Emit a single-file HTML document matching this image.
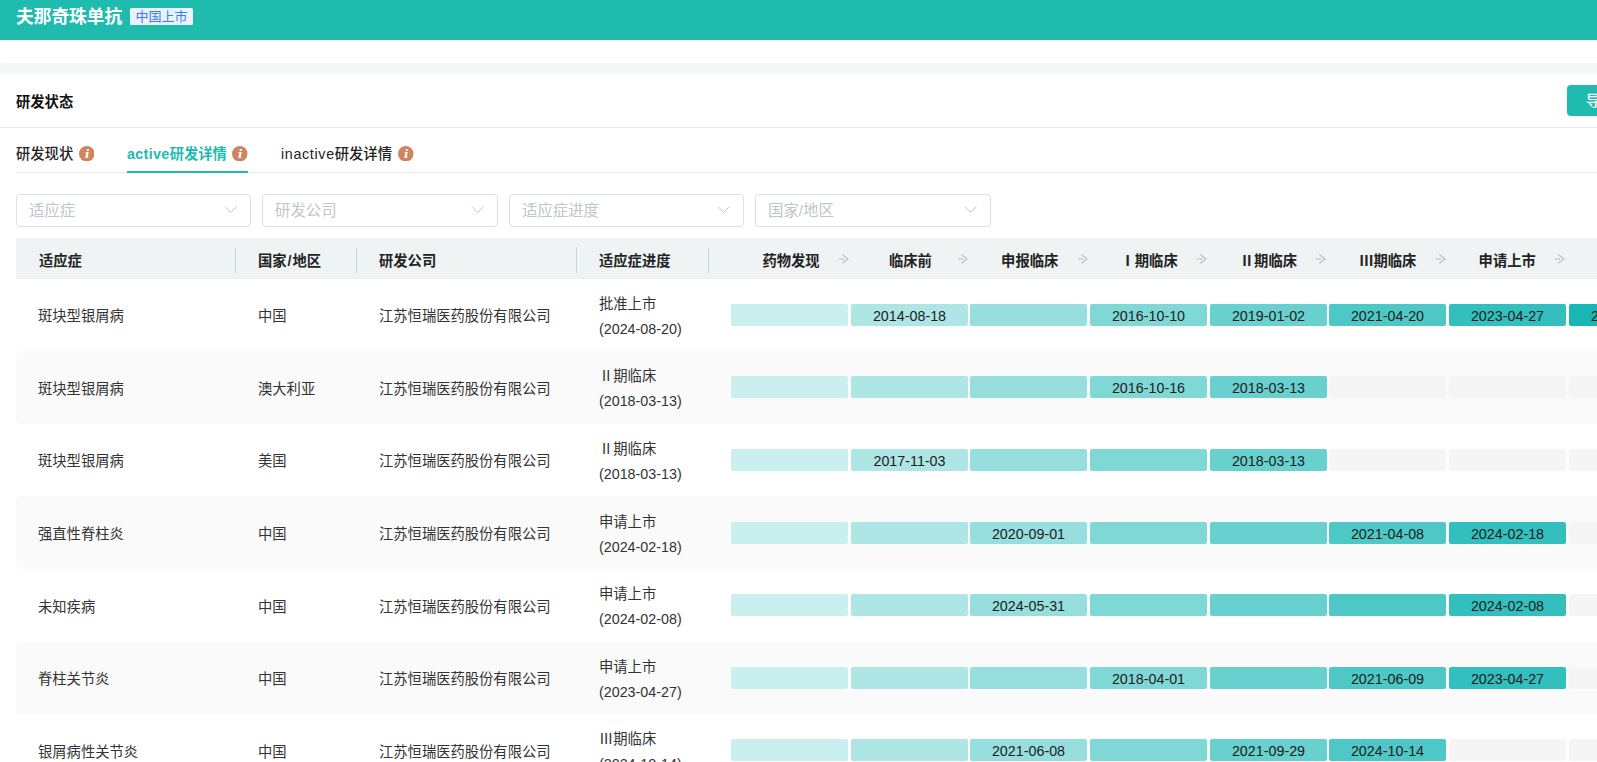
<!DOCTYPE html>
<html lang="zh-CN">
<head>
<meta charset="utf-8">
<title>夫那奇珠单抗</title>
<style>
*{box-sizing:border-box;margin:0;padding:0}
html,body{width:1597px;height:762px;overflow:hidden;background:#fff}
body{position:relative;font-family:"Liberation Sans","Noto Sans CJK SC",sans-serif;font-size:14.3px;color:#333}
.hdr{position:absolute;left:0;top:0;width:1597px;height:40px;background:#1ebbae}
.title{position:absolute;left:16px;top:3px;height:28px;line-height:28px;font-size:17.7px;font-weight:700;color:#fff;white-space:nowrap}
.tag{position:absolute;left:130px;top:8px;width:63px;height:17px;line-height:17px;border-radius:1.5px;background:#ebf1fe;color:#337df5;font-size:13px;text-align:center;white-space:nowrap}
.strip{position:absolute;left:0;top:58px;width:1597px;height:22px;background:#f6f7f9}
.pre{position:absolute;left:0;top:40px;width:1597px;height:23px;background:#fff;border-bottom-left-radius:2.5px}
.card{position:absolute;left:0;top:74px;width:1597px;height:688px;background:#fff;border-top-left-radius:2.5px}
.ctitle{position:absolute;left:16px;top:89.3px;height:26px;line-height:26px;font-weight:700;color:#111;white-space:nowrap}
.btn{position:absolute;left:1567px;top:85px;width:60px;height:31px;line-height:33.6px;font-weight:500;background:#1ebbae;color:#fff;border-radius:4px;padding-left:19px;white-space:nowrap}
.hr1{position:absolute;left:0;top:127px;width:1597px;height:1px;background:#e8e8eb}
.hr2{position:absolute;left:16px;top:172px;width:1581px;height:1px;background:#e4e7ed}
.tab{position:absolute;top:141.3px;height:26px;line-height:26px;font-weight:500;color:#222;white-space:nowrap}
.tab.on{color:#1ebbae;font-weight:700}
.tab.on .lt{letter-spacing:.35px}
.tab .lt{letter-spacing:.66px}
.ink{position:absolute;left:127px;top:171px;width:121px;height:2px;background:#1ebbae}
.info{position:absolute;top:145.8px;width:15.5px;height:15.5px}
.sel{position:absolute;top:194px;width:235px;height:33px;border:1px solid #dcdfe6;border-radius:4px;background:#fff;color:#c0c4cc;font-size:15.4px;line-height:31px;padding-left:12px;white-space:nowrap}
.sel svg{position:absolute;right:12px;top:10px;width:14px;height:10px}
.thead{position:absolute;left:16px;top:238px;width:1581px;height:41px;background:#eff3f4;border-bottom:1px solid #ebeef5}
.th{position:absolute;top:241px;height:40px;line-height:40px;font-weight:700;color:#222;white-space:nowrap}
.vd{position:absolute;top:247px;width:1px;height:26px;background:#c9d5d3}
.ph{position:absolute;top:241px;height:40px;line-height:40px;font-weight:700;color:#222;white-space:nowrap;text-align:center;width:117px}
.arr{position:absolute;top:254px;width:10px;height:10px}
.row{position:absolute;left:16px;width:1581px;height:73px}
.row.s{background:#fafafa;border-top-left-radius:4px;border-bottom-left-radius:4px}
.c{position:absolute;top:1.5px;height:72.6px;line-height:72.6px;white-space:nowrap;color:#333}
.c1{left:22px}.c2{left:242px}.c3{left:363px}
.c4{left:583px;line-height:25.1px;top:12.6px;height:50.2px}
.b{position:absolute;top:25px;width:117px;height:22px;border-radius:2px;line-height:24.4px;text-align:center;color:#1c1c1c;white-space:nowrap;background:#f5f5f5}
.p1{left:715px}.p2{left:835px}.p3{left:954px}.p4{left:1074px}.p5{left:1194px}.p6{left:1313px}.p7{left:1433px}.p8{left:1553px}
.b.p1.a{background:#c9efee}.b.p2.a{background:#aee6e5}.b.p3.a{background:#97dfde}.b.p4.a{background:#80d8d6}.b.p5.a{background:#68d0ce}.b.p6.a{background:#4ec8c7}.b.p7.a{background:#33bfbe}.b.p8.a{background:#18b7b3}
</style>
</head>
<body>
<div class="hdr"><div class="title">夫那奇珠单抗</div><div class="tag">中国上市</div></div>
<div class="strip"></div><div class="pre"></div><div class="card"></div>
<div class="ctitle">研发状态</div><div class="btn">导出</div><div class="hr1"></div>
<div class="tab" style="left:16px">研发现状</div><svg class="info" style="left:78.8px" viewBox="0 0 15 15"><circle cx="7.5" cy="7.5" r="7.5" fill="#cf8461"/><text x="8" y="11.6" text-anchor="middle" font-family="'DejaVu Serif','Liberation Serif',serif" font-style="italic" font-weight="700" font-size="11.4" fill="#fff">i</text></svg>
<div class="tab on" style="left:127px"><span class="lt">active</span>研发详情</div><svg class="info" style="left:232.3px" viewBox="0 0 15 15"><circle cx="7.5" cy="7.5" r="7.5" fill="#cf8461"/><text x="8" y="11.6" text-anchor="middle" font-family="'DejaVu Serif','Liberation Serif',serif" font-style="italic" font-weight="700" font-size="11.4" fill="#fff">i</text></svg>
<div class="tab" style="left:281px"><span class="lt">inactive</span>研发详情</div><svg class="info" style="left:398px" viewBox="0 0 15 15"><circle cx="7.5" cy="7.5" r="7.5" fill="#cf8461"/><text x="8" y="11.6" text-anchor="middle" font-family="'DejaVu Serif','Liberation Serif',serif" font-style="italic" font-weight="700" font-size="11.4" fill="#fff">i</text></svg>
<div class="hr2"></div><div class="ink"></div>
<div class="sel" style="left:16px;width:235px">适应症<svg viewBox="0 0 14 10"><path d="M1 1.6 L6.6 7.5 L12.5 1.5" fill="none" stroke="#bfc3cd" stroke-width="1"/></svg></div>
<div class="sel" style="left:262px;width:236px">研发公司<svg viewBox="0 0 14 10"><path d="M1 1.6 L6.6 7.5 L12.5 1.5" fill="none" stroke="#bfc3cd" stroke-width="1"/></svg></div>
<div class="sel" style="left:509px;width:235px">适应症进度<svg viewBox="0 0 14 10"><path d="M1 1.6 L6.6 7.5 L12.5 1.5" fill="none" stroke="#bfc3cd" stroke-width="1"/></svg></div>
<div class="sel" style="left:755px;width:236px">国家/地区<svg viewBox="0 0 14 10"><path d="M1 1.6 L6.6 7.5 L12.5 1.5" fill="none" stroke="#bfc3cd" stroke-width="1"/></svg></div>
<div class="thead"></div>
<div class="th" style="left:39px">适应症</div>
<div class="th" style="left:258px">国家<span style="margin:0 1px">/</span>地区</div>
<div class="th" style="left:379px">研发公司</div>
<div class="th" style="left:599px">适应症进度</div>
<div class="vd" style="left:235px"></div>
<div class="vd" style="left:356px"></div>
<div class="vd" style="left:576px"></div>
<div class="vd" style="left:708px"></div>
<div class="ph" style="left:732.5px">药物发现</div>
<svg class="arr" style="left:838.9px" viewBox="0 0 10 10"><path d="M0.2 4.9 H2.2 M2.9 4.9 H5" fill="none" stroke="#bdc1ca" stroke-width="1.45"/><path d="M3.4 0.55 L8.9 4.9 L3.4 9.25" fill="none" stroke="#bdc1ca" stroke-width="1.3"/></svg>
<div class="ph" style="left:851.9px">临床前</div>
<svg class="arr" style="left:958.3px" viewBox="0 0 10 10"><path d="M0.2 4.9 H2.2 M2.9 4.9 H5" fill="none" stroke="#bdc1ca" stroke-width="1.45"/><path d="M3.4 0.55 L8.9 4.9 L3.4 9.25" fill="none" stroke="#bdc1ca" stroke-width="1.3"/></svg>
<div class="ph" style="left:971.2px">申报临床</div>
<svg class="arr" style="left:1077.6px" viewBox="0 0 10 10"><path d="M0.2 4.9 H2.2 M2.9 4.9 H5" fill="none" stroke="#bdc1ca" stroke-width="1.45"/><path d="M3.4 0.55 L8.9 4.9 L3.4 9.25" fill="none" stroke="#bdc1ca" stroke-width="1.3"/></svg>
<div class="ph" style="left:1090.6px">Ⅰ期临床</div>
<svg class="arr" style="left:1197.0px" viewBox="0 0 10 10"><path d="M0.2 4.9 H2.2 M2.9 4.9 H5" fill="none" stroke="#bdc1ca" stroke-width="1.45"/><path d="M3.4 0.55 L8.9 4.9 L3.4 9.25" fill="none" stroke="#bdc1ca" stroke-width="1.3"/></svg>
<div class="ph" style="left:1209.9px">Ⅱ期临床</div>
<svg class="arr" style="left:1316.3px" viewBox="0 0 10 10"><path d="M0.2 4.9 H2.2 M2.9 4.9 H5" fill="none" stroke="#bdc1ca" stroke-width="1.45"/><path d="M3.4 0.55 L8.9 4.9 L3.4 9.25" fill="none" stroke="#bdc1ca" stroke-width="1.3"/></svg>
<div class="ph" style="left:1329.3px">Ⅲ期临床</div>
<svg class="arr" style="left:1435.7px" viewBox="0 0 10 10"><path d="M0.2 4.9 H2.2 M2.9 4.9 H5" fill="none" stroke="#bdc1ca" stroke-width="1.45"/><path d="M3.4 0.55 L8.9 4.9 L3.4 9.25" fill="none" stroke="#bdc1ca" stroke-width="1.3"/></svg>
<div class="ph" style="left:1448.7px">申请上市</div>
<svg class="arr" style="left:1555.1px" viewBox="0 0 10 10"><path d="M0.2 4.9 H2.2 M2.9 4.9 H5" fill="none" stroke="#bdc1ca" stroke-width="1.45"/><path d="M3.4 0.55 L8.9 4.9 L3.4 9.25" fill="none" stroke="#bdc1ca" stroke-width="1.3"/></svg>
<div class="ph" style="left:1568.0px">批准上市</div>
<svg class="arr" style="left:1674.4px" viewBox="0 0 10 10"><path d="M0.2 4.9 H2.2 M2.9 4.9 H5" fill="none" stroke="#bdc1ca" stroke-width="1.45"/><path d="M3.4 0.55 L8.9 4.9 L3.4 9.25" fill="none" stroke="#bdc1ca" stroke-width="1.3"/></svg>
<div class="row" style="top:279px;height:72px"><div class="c c1" style="top:1.10px">斑块型银屑病</div><div class="c c2" style="top:1.10px">中国</div><div class="c c3" style="top:1.10px">江苏恒瑞医药股份有限公司</div><div class="c c4" style="top:12.80px">批准上市<br>(2024-08-20)</div><div class="b p1 a" style="top:25px"></div><div class="b p2 a" style="top:25px">2014-08-18</div><div class="b p3 a" style="top:25px"></div><div class="b p4 a" style="top:25px">2016-10-10</div><div class="b p5 a" style="top:25px">2019-01-02</div><div class="b p6 a" style="top:25px">2021-04-20</div><div class="b p7 a" style="top:25px">2023-04-27</div><div class="b p8 a" style="top:25px">2024-08-20</div></div>
<div class="row s" style="top:351px;height:73px"><div class="c c1" style="top:1.70px">斑块型银屑病</div><div class="c c2" style="top:1.70px">澳大利亚</div><div class="c c3" style="top:1.70px">江苏恒瑞医药股份有限公司</div><div class="c c4" style="top:13.40px">Ⅱ期临床<br>(2018-03-13)</div><div class="b p1 a" style="top:25px"></div><div class="b p2 a" style="top:25px"></div><div class="b p3 a" style="top:25px"></div><div class="b p4 a" style="top:25px">2016-10-16</div><div class="b p5 a" style="top:25px">2018-03-13</div><div class="b p6" style="top:25px"></div><div class="b p7" style="top:25px"></div><div class="b p8" style="top:25px"></div></div>
<div class="row" style="top:424px;height:72px"><div class="c c1" style="top:1.30px">斑块型银屑病</div><div class="c c2" style="top:1.30px">美国</div><div class="c c3" style="top:1.30px">江苏恒瑞医药股份有限公司</div><div class="c c4" style="top:13.00px">Ⅱ期临床<br>(2018-03-13)</div><div class="b p1 a" style="top:25px"></div><div class="b p2 a" style="top:25px">2017-11-03</div><div class="b p3 a" style="top:25px"></div><div class="b p4 a" style="top:25px"></div><div class="b p5 a" style="top:25px">2018-03-13</div><div class="b p6" style="top:25px"></div><div class="b p7" style="top:25px"></div><div class="b p8" style="top:25px"></div></div>
<div class="row s" style="top:496px;height:73px"><div class="c c1" style="top:1.90px">强直性脊柱炎</div><div class="c c2" style="top:1.90px">中国</div><div class="c c3" style="top:1.90px">江苏恒瑞医药股份有限公司</div><div class="c c4" style="top:13.60px">申请上市<br>(2024-02-18)</div><div class="b p1 a" style="top:26px"></div><div class="b p2 a" style="top:26px"></div><div class="b p3 a" style="top:26px">2020-09-01</div><div class="b p4 a" style="top:26px"></div><div class="b p5 a" style="top:26px"></div><div class="b p6 a" style="top:26px">2021-04-08</div><div class="b p7 a" style="top:26px">2024-02-18</div><div class="b p8" style="top:26px"></div></div>
<div class="row" style="top:569px;height:73px"><div class="c c1" style="top:1.50px">未知疾病</div><div class="c c2" style="top:1.50px">中国</div><div class="c c3" style="top:1.50px">江苏恒瑞医药股份有限公司</div><div class="c c4" style="top:13.20px">申请上市<br>(2024-02-08)</div><div class="b p1 a" style="top:25px"></div><div class="b p2 a" style="top:25px"></div><div class="b p3 a" style="top:25px">2024-05-31</div><div class="b p4 a" style="top:25px"></div><div class="b p5 a" style="top:25px"></div><div class="b p6 a" style="top:25px"></div><div class="b p7 a" style="top:25px">2024-02-08</div><div class="b p8" style="top:25px"></div></div>
<div class="row s" style="top:642px;height:72px"><div class="c c1" style="top:1.10px">脊柱关节炎</div><div class="c c2" style="top:1.10px">中国</div><div class="c c3" style="top:1.10px">江苏恒瑞医药股份有限公司</div><div class="c c4" style="top:12.80px">申请上市<br>(2023-04-27)</div><div class="b p1 a" style="top:25px"></div><div class="b p2 a" style="top:25px"></div><div class="b p3 a" style="top:25px"></div><div class="b p4 a" style="top:25px">2018-04-01</div><div class="b p5 a" style="top:25px"></div><div class="b p6 a" style="top:25px">2021-06-09</div><div class="b p7 a" style="top:25px">2023-04-27</div><div class="b p8" style="top:25px"></div></div>
<div class="row" style="top:714px;height:73px"><div class="c c1" style="top:1.70px">银屑病性关节炎</div><div class="c c2" style="top:1.70px">中国</div><div class="c c3" style="top:1.70px">江苏恒瑞医药股份有限公司</div><div class="c c4" style="top:13.40px">Ⅲ期临床<br>(2024-10-14)</div><div class="b p1 a" style="top:25px"></div><div class="b p2 a" style="top:25px"></div><div class="b p3 a" style="top:25px">2021-06-08</div><div class="b p4 a" style="top:25px"></div><div class="b p5 a" style="top:25px">2021-09-29</div><div class="b p6 a" style="top:25px">2024-10-14</div><div class="b p7" style="top:25px"></div><div class="b p8" style="top:25px"></div></div>
</body>
</html>
